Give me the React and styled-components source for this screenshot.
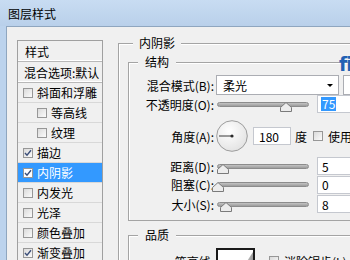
import React from 'react';
import styled, { createGlobalStyle } from 'styled-components';

const GlobalStyle = createGlobalStyle`
  html, body {
    margin: 0;
    padding: 0;
    background: #f0f0f0;
  }
  body {
    font-family: "Noto Sans CJK SC", "Liberation Sans", sans-serif;
    font-size: 12px;
    color: #000;
  }
`;

const Window = styled.div`
  position: relative;
  width: 350px;
  height: 260px;
  overflow: hidden;
  display: flex;
  flex-direction: column;
  background: #bcd3ed;
`;

const TitleBar = styled.div`
  height: 26px;
  flex-shrink: 0;
  display: flex;
  align-items: center;
  padding-left: 8px;
  background: linear-gradient(#c8dcf2, #b9d0ea);
  font-size: 12px;
`;

const Frame = styled.div`
  flex: 1;
  display: flex;
  padding-left: 6px;
  min-height: 0;
`;

const Body = styled.div`
  flex: 1;
  display: flex;
  align-items: flex-start;
  background: #f0f0f0;
  border-left: 1px solid #8fa6bf;
  border-top: 1px solid #8fa6bf;
  padding: 8px 0 0 10px;
  min-width: 0;
`;

const StyleList = styled.div`
  width: 86px;
  flex-shrink: 0;
  box-sizing: border-box;
  margin-top: 5px;
  border: 1px solid #a0a0a0;
  border-bottom: none;
  background: #f0f0f0;
`;

const HeaderRow = styled.div`
  height: 21px;
  box-sizing: border-box;
  display: flex;
  align-items: center;
  padding-left: ${p => p.$pad}px;
  border-bottom: 1px solid #b8b8b8;
  box-shadow: inset 0 -1px 0 #ffffff;
  white-space: nowrap;
`;

const ListRow = styled.div`
  height: 20px;
  box-sizing: border-box;
  display: flex;
  align-items: center;
  gap: 4px;
  padding-left: ${p => (p.$indent ? 19 : 5)}px;
  border-bottom: 1px solid #d8d8d8;
  background: ${p => (p.$active ? '#3399ff' : 'transparent')};
  color: ${p => (p.$active ? '#ffffff' : '#000000')};
  white-space: nowrap;
`;

const Box = styled.span`
  width: 10px;
  height: 10px;
  box-sizing: border-box;
  flex-shrink: 0;
  display: inline-flex;
  align-items: center;
  justify-content: center;
  border: 1px solid #979797;
  background: ${p => (p.$white ? '#ffffff' : 'linear-gradient(135deg, #dadada, #fbfbfb)')};
`;

const Check = ({ checked, white }) => (
  <Box $white={white}>
    {checked && (
      <svg width="8" height="8" viewBox="0 0 8 8">
        <path d="M1 4 L3 6.2 L7 1.2" fill="none" stroke="#3b4f7a" strokeWidth="1.4" />
      </svg>
    )}
  </Box>
);

const Group = styled.fieldset`
  margin: 0;
  min-width: 0;
  box-sizing: border-box;
  border: 1px solid #a4a4a4;
  box-shadow: inset 1px 1px 0 #ffffff;
`;

const OuterGroup = styled(Group)`
  flex-shrink: 0;
  width: 260px;
  height: 260px;
  margin-left: 15px;
  padding: 3px 0 0 9px;
`;

const InnerGroup = styled(Group)`
  padding: ${p => p.$pt}px 0 ${p => p.$pb}px 0;
  margin-top: ${p => p.$mt}px;
`;

const Legend = styled.legend`
  line-height: 16px;
  margin-left: ${p => p.$ml}px;
  padding: 0 ${p => p.$px}px;
  background: #f0f0f0;
`;

const Row = styled.div`
  display: flex;
  align-items: center;
  height: ${p => p.$h}px;
  margin-top: ${p => p.$mt || 0}px;
  white-space: nowrap;

  & > * {
    flex-shrink: 0;
  }
`;

const Label = styled.span`
  width: 85px;
  text-align: right;
  margin-right: 2px;
`;

const Select = styled.div`
  width: 123px;
  height: 20px;
  box-sizing: border-box;
  display: flex;
  align-items: center;
  justify-content: space-between;
  padding: 0 5px 0 6px;
  background: #ffffff;
  border: 1px solid #abadb3;
`;

const Arrow = styled.span`
  width: 0;
  height: 0;
  border-left: 3px solid transparent;
  border-right: 3px solid transparent;
  border-top: 3px solid #000;
`;

const Swatch = styled.div`
  width: 30px;
  height: 20px;
  margin-left: 4px;
  box-sizing: border-box;
  border: 1px solid #abadb3;
  background: #ffffff;
`;

const Track = styled.div`
  position: relative;
  width: 92px;
  height: 5px;
  box-sizing: border-box;
  margin-left: 1px;
  border: 1px solid #8c8c8c;
  border-radius: 3px;
  background: linear-gradient(#c4c4c4, #9c9c9c);
`;

const Thumb = styled.svg`
  position: absolute;
  top: -1px;
  margin-left: -6px;
`;

const Slider = ({ value }) => (
  <Track>
    <Thumb width="12" height="10" viewBox="0 0 12 10" style={{ left: `${value}%` }}>
      <path d="M6 0.5 L11.5 5.5 L11.5 9.5 L0.5 9.5 L0.5 5.5 Z" fill="#ececec" stroke="#7a7a7a" />
    </Thumb>
  </Track>
);

const Field = styled.div`
  width: ${p => p.$w}px;
  height: 18px;
  box-sizing: border-box;
  margin-left: ${p => p.$ml}px;
  display: flex;
  align-items: center;
  padding-left: ${p => p.$pl || 4}px;
  background: #ffffff;
  border: 1px solid #c5c8cf;
`;

const Selected = styled.span`
  background: #3399ff;
  color: #ffffff;
  padding: 0 1px;
  line-height: 14px;
`;

const DialFace = styled.svg`
  display: block;
  width: 32px;
  height: 32px;
`;

const Dial = () => (
  <DialFace viewBox="0 0 32 32">
    <defs>
      <radialGradient id="dialFill" cx="0.4" cy="0.35" r="0.7">
        <stop offset="0" stopColor="#ffffff" />
        <stop offset="1" stopColor="#e2e2e2" />
      </radialGradient>
    </defs>
    <circle cx="16" cy="16" r="15.3" fill="url(#dialFill)" stroke="#9c9c9c" />
    <line x1="16" y1="16" x2="3" y2="16" stroke="#3a3a3a" strokeWidth="1" />
    <circle cx="16" cy="16" r="1.6" fill="#2a2a2a" />
  </DialFace>
);

const Unit = styled.span`
  margin-left: 4px;
`;

const CheckText = styled.span`
  display: inline-flex;
  align-items: center;
  gap: 5px;
  margin-left: ${p => p.$ml}px;
`;

const ContourBox = styled.div`
  width: 39px;
  height: 26px;
  box-sizing: border-box;
  border: 2px solid #1a1a1a;
  background: #ffffff;
`;

const Watermark = styled.span`
  position: absolute;
  left: 339px;
  top: 53px;
  font-family: "DejaVu Sans", sans-serif;
  font-weight: bold;
  font-size: 19px;
  color: #2160b4;
  letter-spacing: -1px;
`;

const listItems = [
  { name: '斜面和浮雕', checked: false },
  { name: '等高线', checked: false, indent: true },
  { name: '纹理', checked: false, indent: true },
  { name: '描边', checked: true },
  { name: '内阴影', checked: true, active: true },
  { name: '内发光', checked: false },
  { name: '光泽', checked: false },
  { name: '颜色叠加', checked: false },
  { name: '渐变叠加', checked: true },
];

export default function App() {
  return (
    <>
      <GlobalStyle />
      <Window>
        <TitleBar>图层样式</TitleBar>
        <Frame>
          <Body>
            <StyleList>
              <HeaderRow $pad={7}>样式</HeaderRow>
              <HeaderRow $pad={6}>混合选项:默认</HeaderRow>
              {listItems.map(item => (
                <ListRow key={item.name} $indent={item.indent} $active={item.active}>
                  <Check checked={item.checked} white={item.active} />
                  {item.name}
                </ListRow>
              ))}
            </StyleList>

            <OuterGroup>
              <Legend $ml={5} $px={6}>内阴影</Legend>
              <InnerGroup $pt={5} $pb={6} $mt={0}>
                <Legend $ml={9} $px={7}>结构</Legend>
                <Row $h={20}>
                  <Label>混合模式(B):</Label>
                  <Select>
                    柔光
                    <Arrow />
                  </Select>
                  <Swatch />
                </Row>
                <Row $h={18}>
                  <Label>不透明度(O):</Label>
                  <Slider value={75} />
                  <Field $w={40} $ml={8} $pl={3}>
                    <Selected>75</Selected>
                  </Field>
                </Row>
                <Row $h={32} $mt={7}>
                  <Label>角度(A):</Label>
                  <Dial />
                  <Field $w={38} $ml={5} $pl={5}>180</Field>
                  <Unit>度</Unit>
                  <CheckText $ml={6}>
                    <Check />
                    使用全局光
                  </CheckText>
                </Row>
                <Row $h={18} $mt={5}>
                  <Label>距离(D):</Label>
                  <Slider value={6} />
                  <Field $w={40} $ml={8}>5</Field>
                </Row>
                <Row $h={19}>
                  <Label>阻塞(C):</Label>
                  <Slider value={0} />
                  <Field $w={40} $ml={8}>0</Field>
                </Row>
                <Row $h={20}>
                  <Label>大小(S):</Label>
                  <Slider value={9} />
                  <Field $w={40} $ml={8}>8</Field>
                </Row>
              </InnerGroup>
              <InnerGroup $pt={5} $pb={6} $mt={6}>
                <Legend $ml={9} $px={7}>品质</Legend>
                <Row $h={26}>
                  <Label>等高线:</Label>
                  <ContourBox>
                    <svg width="35" height="22" viewBox="0 0 35 22">
                      <defs>
                        <linearGradient id="contourFill" x1="0" y1="0" x2="1" y2="0">
                          <stop offset="0" stopColor="#e6e6e6" />
                          <stop offset="1" stopColor="#9a9a9a" />
                        </linearGradient>
                      </defs>
                      <path d="M22 22 L35 2 L35 22 Z" fill="url(#contourFill)" />
                    </svg>
                  </ContourBox>
                  <CheckText $ml={14}>
                    <Check />
                    消除锯齿(L)
                  </CheckText>
                </Row>
              </InnerGroup>
            </OuterGroup>
          </Body>
        </Frame>
        <Watermark>fi</Watermark>
      </Window>
    </>
  );
}
